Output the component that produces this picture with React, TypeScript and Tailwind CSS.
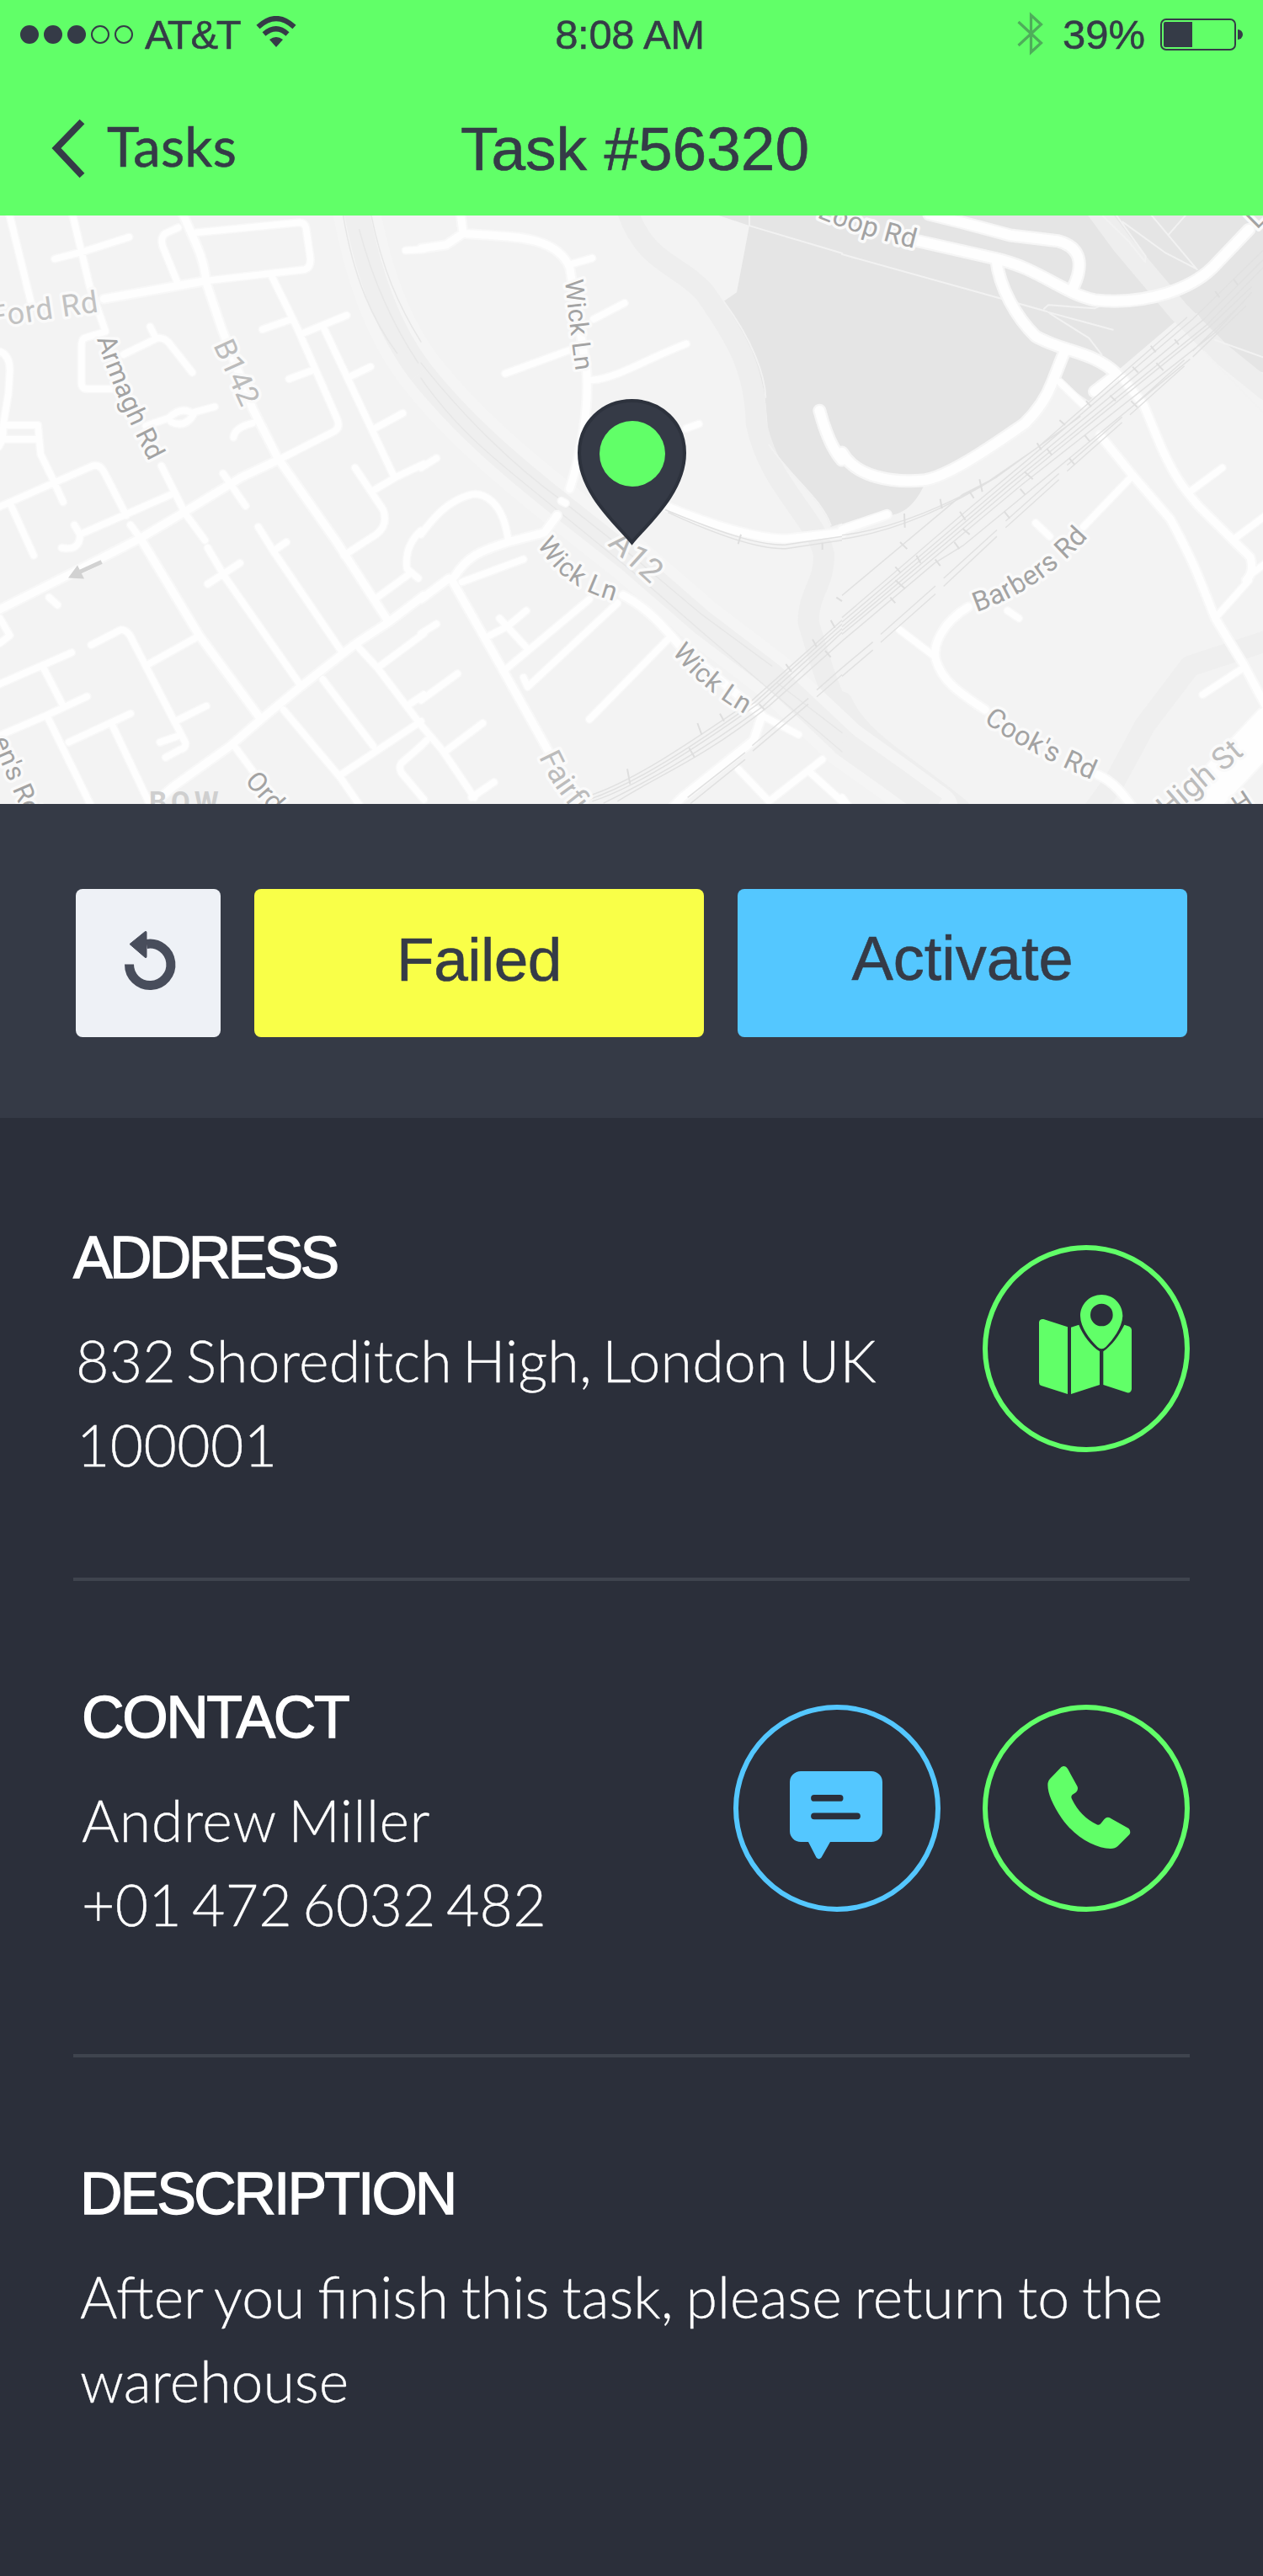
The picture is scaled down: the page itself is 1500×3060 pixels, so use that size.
import React from "react";

/* The map is surveyed as three sheets, each on its own 1500 x 1568 grid. */
type Sheets = { w?: string; c?: string; e?: string };

const SHEET_ORIGIN = { w: 0, c: 500, e: 1000 } as const;

function Layer({ d, stroke, width, fill = "none", cap = "round" }: { d: Sheets; stroke?: string; width?: number; fill?: string; cap?: "round" | "butt" }) {
  return (
    <>
      {(Object.keys(d) as (keyof Sheets)[]).map((k) => (
        <g key={k} transform={`translate(${SHEET_ORIGIN[k]} -6) scale(0.33333 0.45281)`}>
          <path d={d[k]} fill={fill} stroke={stroke} strokeWidth={width} strokeLinecap={cap} strokeLinejoin="round" vectorEffect="non-scaling-stroke" />
        </g>
      ))}
    </>
  );
}

const park: Sheets = {
  c: "M1060 13 L1170 40 L1125 215 L1075 240 C1150 320 1220 420 1230 520 L1240 610 C1330 710 1420 750 1460 830 L1502 820 V0 H1040Z",
  e: "M0 0 H1500 V425 L1410 405 L1340 345 L1265 270 L1190 290 L990 415 L880 500 L780 450 L750 450 Q700 530 640 565 C500 640 400 700 290 725 Q240 800 160 800 L0 830Z",
};
const river: Sheets = {
  c: "M735 0 C800 140 920 140 1010 215 C1130 340 1190 420 1195 560 C1240 720 1400 800 1435 900 C1440 980 1380 1000 1380 1080 C1420 1180 1450 1250 1500 1330",
  e: "M900 -10 L1000 90 L1200 265 L1350 375 L1510 470 M0 1290 C60 1390 220 1450 420 1570",
};
const creek: Sheets = { e: "M1510 1130 L1240 1195 L1080 1350 L970 1500 L900 1570" };
const motorway: Sheets = {
  w: "M1270 0 C1320 200 1400 330 1500 425",
  c: "M0 425 C150 565 330 675 500 775 L750 920 L1000 1080 L1250 1220 L1510 1400",
  e: "M0 1395 L200 1500 L330 1570",
};
const motorwayLines: Sheets = {
  w: "M1222 10 C1260 180 1330 290 1415 375 M1322 10 C1360 150 1420 250 1500 345 M1280 50 C1330 190 1400 300 1490 400",
  c: "M0 400 C150 540 330 670 500 760 L750 905 L1000 1060 L1250 1195 M0 440 C150 600 330 690 500 795 L750 945 L1000 1105 L1500 1420 M1270 1240 L1500 1370",
};
const footpaths: Sheets = {
  c: "M1170 0 L1170 40 L1500 112 M1080 240 C1180 340 1225 430 1228 490 M1240 615 C1330 710 1420 750 1460 825",
  e: "M0 115 L570 232 L730 265 M720 258 L735 248 L900 257 L925 248 M735 267 L850 290 L965 313 M740 270 L880 335 L925 378 M930 15 L1020 80 L1080 135 L1082 120 L975 10 M1100 10 L1265 155 M1000 30 L1150 110 L1260 152 M1165 62 L1225 12 M1330 340 L1500 385 M1290 370 L1500 530",
};
const lanes: Sheets = {
  w: "M30 0 L110 240 M255 0 L320 200 L375 315 M195 127 L310 105 L460 70 M635 45 L590 60 Q570 70 580 95 L630 185 M730 185 L1085 155 Q1110 150 1105 120 L1090 45 Q1085 30 1060 32 L700 58 M1445 105 L1510 102 M0 370 Q35 380 35 420 L30 480 L12 560 L10 600 L-5 620 M15 563 H135 L145 640 L185 700 L225 765 M20 600 H140 M375 318 L300 335 Q290 340 290 360 V450 Q290 468 310 468 H400 M440 378 L560 335 Q590 332 610 355 L685 425 M535 305 L555 335 M520 565 L600 545 Q650 510 690 535 Q660 572 610 555 M690 530 L765 515 M832 595 Q835 570 900 558 M935 312 L1040 285 M1070 325 L1235 275 M1155 310 L1405 700 M1250 435 L1320 410 M1030 442 L1110 420 M1335 572 L1435 532 M990 655 L1190 580 Q1215 570 1200 545 L1060 310 L970 175 M-10 780 L330 670 Q355 665 370 685 L450 800 M40 775 L120 905 M220 885 Q285 895 285 850 L440 800 L610 745 M265 825 L285 850 M575 670 L660 795 L730 865 M740 885 L800 960 L1070 1245 M740 980 L855 925 M465 825 L500 860 L710 1115 L930 1335 M795 690 L875 775 M920 830 L975 895 L1220 1160 M975 893 L1020 870 M1265 675 L1365 785 Q1385 825 1340 850 L1225 905 M1330 735 L1410 700 L1510 665 M1500 840 Q1440 880 1450 940 L1490 965 M1345 1015 L1465 950 M1270 1140 L1345 1200 L1500 1350 M1345 1200 L1510 1110 M1450 1300 L1510 1270 M1150 1230 L1330 1405 M1010 1310 L1215 1490 L1290 1570 M1215 1480 L1500 1340 M1500 1405 L1430 1450 Q1420 1460 1430 1475 L1510 1545 M840 1410 L900 1470 M175 1015 L205 1035 M0 1070 L35 1115 L0 1135 M325 1140 L430 1100 Q455 1100 470 1125 L660 1395 Q665 1410 640 1415 L590 1435 M570 1395 L630 1380 M625 1340 L735 1300 M530 1190 L700 1120 M-10 1245 L255 1160 M155 1200 L225 1300 M-10 1380 L165 1325 L310 1275 M170 1330 L330 1570 M245 1395 L465 1320 M400 1350 L535 1560",
  c: "M540 140 L610 125 M615 285 L725 243 M300 428 L535 365 M610 445 C700 440 800 390 945 350 M945 572 L990 560 M500 762 L515 768 M310 860 C290 760 220 740 180 745 C100 760 50 800 0 850 M0 675 L55 650 M145 975 L365 915 M300 1205 L600 1020 M365 1225 L380 1250 L700 1030 M600 1335 L880 1125 M245 1115 L310 1090 L375 1050 M280 1070 L380 1150 M0 1110 L55 1085 M0 1285 L130 1215 M0 1350 L75 1415 L190 1540 M85 1420 L220 1345 M180 1540 L260 1500 M0 1405 L20 1390 M1130 1465 L1240 1550 L1430 1440 M1380 1470 L1500 1550 M1215 1325 L1345 1375",
  e: "M860 830 L1030 700 M690 820 L740 855 M1245 735 L1355 675 M1400 860 L1510 800 M1465 950 L1510 925 M205 1100 L330 1170 M590 1050 L630 1070 M1285 1270 L1430 1200 M775 450 L860 510 M1335 1065 L1450 970 M0 1540 L30 1570",
};
const streets: Sheets = {
  w: "M370 232 L730 185 M640 -10 L700 90 Q730 140 735 190 L790 310 L900 520 L990 650 L1200 870 L1385 1080 M-10 1050 L260 950 L500 860 L660 790 L860 700 L990 655 M1510 1010 L1385 1080 L1270 1135 L1070 1250 L930 1335 L820 1405 L620 1510 L540 1560 M500 860 L710 1115 L930 1335",
  c: "M0 100 L90 90 L150 60 C300 70 480 60 530 150 L590 420 C600 520 570 640 530 730 M150 60 L140 0 M485 800 L440 845 L310 870 C230 890 170 900 120 960 M0 1020 L100 965 M110 970 L280 1190 L440 1400 L500 1480 M720 1010 C800 1040 850 1080 920 1140 L1215 1325 L1185 1390 L930 1540 L890 1570 M870 775 C1050 830 1200 860 1300 862 L1500 845",
  e: "M0 838 L160 798 M920 590 L1030 690 L1170 810 C1260 930 1280 980 1330 1070 L1430 1190 L1510 1300 M1000 440 L1075 510 L1120 590 C1180 700 1230 740 1270 775 L1455 910 Q1470 950 1440 970 M450 1040 C360 1080 320 1140 335 1180 C360 1240 430 1270 510 1310 M910 1480 C970 1500 1000 1530 1040 1570",
};
const avenues: Sheets = {
  c: "M1420 525 C1440 580 1470 630 1500 655",
  e: "M0 635 C50 700 180 715 290 708 C380 700 550 610 650 560 Q720 510 750 450 L790 375 M310 10 L420 30 L600 65 L770 80 C870 100 850 160 825 200 M270 80 L540 125 C700 150 780 215 900 235 C1100 250 1250 200 1320 150 L1450 50 M550 130 C560 200 620 280 690 330 C780 370 900 370 980 430 L900 475",
};
const highStreet: Sheets = { e: "M1160 1640 L1530 1350" };
const rails: Sheets = {
  c: "M600 1535 C750 1500 950 1400 1180 1285 L1500 1075 M600 1545 C760 1505 960 1410 1190 1290 L1500 1085 M610 1550 C760 1515 970 1415 1200 1295 L1500 1097 M650 1555 C800 1500 980 1430 1220 1300 L1500 1107 M700 1550 C850 1480 1000 1440 1240 1300 L1500 1130 M870 785 C1050 840 1200 880 1300 877 L1500 855 M880 792 C1050 850 1200 890 1300 887 L1500 865 M950 1540 L1155 1422 M960 1556 L1155 1440 M1180 1404 L1380 1280 M1182 1418 L1380 1295 M1410 1258 L1500 1200 M1410 1276 L1500 1218",
  e: "M0 1068 L440 790 L660 655 L1250 285 L1500 105 M0 1080 L600 705 L1290 285 L1500 130 M0 1092 L600 717 L1300 300 L1500 150 M0 1102 L640 705 L1310 305 L1460 200 M0 1112 L640 720 L1330 320 L1460 215 M0 1130 L330 925 L430 880 L1240 390 M0 1010 L430 745 L550 700 L850 540 M0 852 C200 835 400 760 500 722 L700 620 L1230 280 M0 862 C200 842 400 770 550 700 M0 1200 L110 1132 M0 1222 L110 1153 M138 1112 L333 985 M138 1133 L333 1006 M362 965 L552 838 M362 986 L552 855 M583 815 L773 690 M583 832 L773 706 M802 668 L998 542 M802 684 L998 556 M1026 520 L1220 392 M1026 536 L1220 408 M1250 368 L1430 240 M1250 384 L1440 250",
};
const sleepers: Sheets = {
  c: "M1130 875 L1140 850 M1430 890 V872 M985 1345 L1000 1375 M955 1410 L975 1435 M735 1465 L745 1505 M1065 1320 L1080 1340 M1460 1075 L1475 1095 M1480 1015 L1500 1025 M1440 1155 L1460 1172 M1395 1125 L1410 1145 M1300 1190 L1320 1210 M1205 1295 L1225 1310",
  e: "M350 757 L356 782 M222 795 L224 832 M490 705 L500 738 M455 738 L470 755 M207 870 L232 888 M775 550 L795 563 M695 610 L710 628 M1100 355 L1118 372 M1185 338 L1200 352 M955 485 L975 500 M1035 410 L1055 425 M870 500 L888 515 M730 625 L748 642 M650 685 L680 705 M635 730 L652 745 M578 790 L598 808 M420 790 L440 812 M430 835 L455 850 M400 870 L418 888 M332 915 L350 932 M190 935 L208 950 M190 970 L225 992 M172 1015 L190 1030 M265 905 L280 925 M810 650 L828 666 M865 590 L883 606 M1120 400 L1145 420 M1030 500 L1052 516 M1330 212 L1345 228 M1395 180 L1410 195",
};
const arrowhead: Sheets = { w: "M243 964 L276 931 L300 966Z" };

type LabelProps = { id: string; d: string; size: number; color?: string; spacing?: number; children: string };
function StreetLabel({ id, d, size, color = "#a3a3a3", spacing = 0, children }: LabelProps) {
  return (
    <>
      <path id={id} d={d} fill="none" />
      <text fontSize={size} fill={color} stroke="#fafafa" strokeWidth={7} strokeLinejoin="round" paintOrder="stroke" letterSpacing={spacing}>
        <textPath href={`#${id}`}>{children}</textPath>
      </text>
    </>
  );
}

function StreetMap() {
  return (
    <svg className="block h-[699px] w-full bg-[#f3f3f3]" viewBox="0 0 1500 699" fontFamily="Roboto, sans-serif">
      <Layer d={park} fill="#e5e5e5" />
      <Layer d={river} stroke="#eeeeee" width={25} />
      <Layer d={creek} stroke="#efefef" width={25} />
      <Layer d={motorway} stroke="#f5f5f5" width={56} />
      <Layer d={motorway} stroke="#efefef" width={30} cap="butt" />
      <Layer d={motorwayLines} stroke="#e7e7e7" width={1.5} />
      <Layer d={footpaths} stroke="#f2f2f2" width={2} />
      <Layer d={lanes} stroke="#f8f8f8" width={10.5} />
      <Layer d={streets} stroke="#f8f8f8" width={13} />
      <Layer d={avenues} stroke="#f6f6f6" width={16} />
      <Layer d={highStreet} stroke="#f8f8f8" width={50} />
      <Layer d={lanes} stroke="#fefefe" width={7.5} />
      <Layer d={streets} stroke="#fefefe" width={9} />
      <Layer d={avenues} stroke="#fefefe" width={11.5} />
      <Layer d={highStreet} stroke="#fefefe" width={46} />
      <Layer d={rails} stroke="#e1e1e1" width={1.5} cap="butt" />
      <Layer d={sleepers} stroke="#dedede" width={2} cap="butt" />
      <Layer d={{ w: "M362 922 L285 948" }} stroke="#d2d2d2" width={5} cap="butt" />
      <Layer d={arrowhead} fill="#d2d2d2" />

      <StreetLabel id="ford" d="M-10 133 L160 108" size={36} spacing={0.9} color="#c2c2c2">Ford Rd</StreetLabel>
      <StreetLabel id="armagh" d="M115 147 Q140 225 188 312" size={31.5} spacing={0.3}>Armagh Rd</StreetLabel>
      <StreetLabel id="b142" d="M253 154 L297 250" size={35.5} color="#bcbcbc">B142</StreetLabel>
      <StreetLabel id="allens" d="M-10 624 L40 740" size={32}>en's Rd</StreetLabel>
      <StreetLabel id="ordell" d="M290 672 L360 752" size={32}>Ordell</StreetLabel>
      <StreetLabel id="wick1" d="M671 77 Q677 140 688 215" size={30.5} spacing={0.3}>Wick Ln</StreetLabel>
      <StreetLabel id="a12" d="M721 391 L800 463" size={39} spacing={0.4} color="#b8b8b8">A12</StreetLabel>
      <StreetLabel id="wick2" d="M638 391 C662 430 690 450 750 463" size={31.5} spacing={1}>Wick Ln</StreetLabel>
      <StreetLabel id="wick3" d="M798 519 Q838 570 905 603" size={31.5} spacing={0.6}>Wick Ln</StreetLabel>
      <StreetLabel id="fairfield" d="M640 643 Q660 690 720 750" size={36} color="#bcbcbc">Fairfield</StreetLabel>
      <StreetLabel id="loop1" d="M970 2 Q1020 24 1110 45" size={32.5} spacing={0.4}>Loop Rd</StreetLabel>
      <StreetLabel id="barbers" d="M1160 471 Q1250 440 1310 360" size={32.5} spacing={0.3}>Barbers Rd</StreetLabel>
      <StreetLabel id="cooks" d="M1168 601 Q1220 640 1320 680" size={32.5} spacing={0.5}>Cook's Rd</StreetLabel>
      <StreetLabel id="high" d="M1387 717 L1500 621" size={37} color="#bcbcbc">High St</StreetLabel>
      <StreetLabel id="loop2" d="M1493 17 L1530 -20" size={31}>L</StreetLabel>
      <StreetLabel id="hunts" d="M1472 712 L1520 680" size={31}>H</StreetLabel>
      <text x={177} y={708} fontSize={33} fontWeight={700} letterSpacing={5} fill="#cfcfcf">BOW</text>

      <path d="M750.5 388.500C735 369 688 330 688 282C688 246 716 220 750.500 220C785 220 813 246 813 282C813 330 766 369 750.500 388.500Z" fill="#353a46" stroke="#2d323d" strokeWidth="4" />
      <circle cx="751" cy="283" r="39" fill="#61ff68" />
    </svg>
  );
}

function StatusBar() {
  return (
    <div className="relative flex h-20 items-start justify-between pl-6 pr-6 text-[49px] leading-[49px] text-[#353b47] [-webkit-text-stroke:0.500px_#353b47]">
      <div className="flex items-start">
        <div className="mt-[30px] flex gap-1.5">
          {[true, true, true, false, false].map((on, i) => (
            <span key={i} className={on ? "size-[22px] rounded-full bg-[#353b47]" : "size-[22px] rounded-full border-2 border-[#353b47]"} />
          ))}
        </div>
        <span className="ml-3.5 mt-[17px] w-[114px] whitespace-nowrap tracking-[-2.300px]">AT&amp;T</span>
        <svg className="ml-[17px] mt-[19px] h-[38px] w-[50px]" viewBox="303 19 50 38" fill="none" stroke="#353b47" strokeWidth="6">
          <path d="M306.500 32Q328 12 349.500 32" />
          <path d="M313.500 40.500Q328 28 341.500 40.500" />
          <path d="M320 47Q328 41 336 47L328 56Z" fill="#353b47" stroke="none" />
        </svg>
      </div>
      <span className="absolute inset-x-0 top-[17px] pr-1 text-center tracking-[-0.300px]">8:08 AM</span>
      <div className="flex items-start">
        <svg className="mt-3.5 h-[52px] w-8" viewBox="0 0 32 52" fill="none" stroke="#353b47" strokeOpacity=".42" strokeWidth="3.200">
          <path d="M1.500 12L28.500 37L16.500 48V4L28.500 15L1.500 40" />
        </svg>
        <span className="ml-[22px] mt-[17px]">39%</span>
        <div className="ml-[18px] mt-[22px] h-[38px] w-[90px] rounded-[7px] border-2 border-[#353b47] p-0.5">
          <div className="h-[30px] w-[34px] rounded-l-[2px] bg-[#353b47]" />
        </div>
        <div className="ml-0.5 mt-[35px] h-3 w-1.5 rounded-r-full bg-[#353b47]" />
      </div>
    </div>
  );
}

function NavBar() {
  return (
    <div className="relative flex h-44 items-start text-[#353b47] [-webkit-text-stroke:0.600px_#353b47]">
      <svg className="ml-[60px] mt-[60px] h-[74px] w-[42px]" viewBox="60 140 42 74" fill="none" stroke="#353b47" strokeWidth="8">
        <path d="M97.500 144.500L67 176L97.500 208.500" />
      </svg>
      <span className="ml-[25px] mt-[61px] font-['Lato',sans-serif] text-[65px] leading-[65px] tracking-[0.300px]">Tasks</span>
      <h1 className="absolute inset-x-0 top-[61px] pl-2 text-center text-[73px] leading-[72px]">Task #56320</h1>
    </div>
  );
}

const heading = "text-[70px] leading-[70px] [-webkit-text-stroke:1.300px_white]";
const body = "mt-[37px] font-['Lato',sans-serif] text-[68px] font-light leading-[100px] [-webkit-text-stroke:0.300px_white]";

function RoundButton({ label, viewBox, tone, children }: { label: string; viewBox: string; tone: "green" | "blue"; children: React.ReactNode }) {
  return (
    <button
      aria-label={label}
      className={tone === "green" ? "size-[246px] shrink-0 rounded-full border-[6px] border-[#61ff68] text-[#61ff68]" : "size-[246px] shrink-0 rounded-full border-[6px] border-[#54c7ff] text-[#54c7ff]"}
    >
      <svg className="size-[234px]" viewBox={viewBox} fill="currentColor">
        {children}
      </svg>
    </button>
  );
}

export default function App() {
  return (
    <div className="flex h-[3060px] w-[1500px] flex-col overflow-hidden bg-[#2b2f3a] font-['Liberation_Sans',Arial,sans-serif]">
      <header className="h-64 shrink-0 bg-[#61ff68]">
        <StatusBar />
        <NavBar />
      </header>

      <div className="h-[699px] shrink-0">
        <StreetMap />
      </div>

      <section className="flex h-[373px] shrink-0 items-start gap-10 bg-[#353a46] px-[90px] pt-[101px] text-[#353b47]">
        <button aria-label="Undo" className="h-44 w-[172px] rounded-lg bg-[#eef1f6]">
          <svg className="h-44 w-[172px]" viewBox="90 1056 172 176">
            <path d="M153.500 1145.500A24.700 24.700 0 1 0 174 1121.500" fill="none" stroke="#484d5b" strokeWidth="11" />
            <path d="M154 1121.500L172.500 1106.500Q174 1106 174 1107.500V1136.500Q174 1138 172.500 1137.500Z" fill="#484d5b" stroke="#484d5b" strokeWidth="1" />
          </svg>
        </button>
        <button className="h-44 w-[534px] rounded-lg bg-[#f9ff48] pb-[9px] text-[73px] leading-[73px] tracking-[-0.500px] [-webkit-text-stroke:0.600px_#353b47]">Failed</button>
        <button className="h-44 w-[534px] rounded-lg bg-[#54c7ff] pb-[11px] text-[74px] leading-[74px] [-webkit-text-stroke:0.600px_#353b47]">Activate</button>
      </section>

      <main className="pl-[87px] pr-[87px] pt-[131px] text-white">
        <section className="flex h-[415px] items-start justify-between">
          <div>
            <h2 className={`${heading} tracking-[-3.700px]`}>ADDRESS</h2>
            <p className={`${body} pl-[3px]`}>
              <span className="block tracking-[0.200px] [word-spacing:-6.500px]">832 Shoreditch High, London UK</span>
              <span className="block pl-px tracking-[0.300px]">100001</span>
            </p>
          </div>
          <div className="mt-5">
            <RoundButton label="Open map" viewBox="99 105 702 702" tone="green">
              <path d="M298 351L384 379V618L290 588Q282 585 282 576V362Q284 349 298 351Z" />
              <path d="M396 380L424 371C438 408 468 446 498 466V585L396 618Z" />
              <path d="M586 371L604 377Q612 381 612 389V600Q610 615 596 613L511 585V466C542 444 568 408 586 371Z" />
              <path fillRule="evenodd" d="M505 264C548 264 580 298 580 340C578 382 545 425 520 450Q505 464 490 450C462 422 430 382 429 340C429 298 462 264 505 264ZM505 296A40 40 0 1 0 505 376A40 40 0 1 0 505 296Z" />
            </RoundButton>
          </div>
        </section>
        <hr className="h-1 border-0 bg-[#3f444e]" />
        <section className="flex h-[562px] items-start justify-between pt-[127px]">
          <div className="pl-[10px]">
            <h2 className={`${heading} tracking-[-2.400px]`}>CONTACT</h2>
            <p className={`${body}`}>
              <span className="block tracking-[0.500px] [word-spacing:-4px]">Andrew Miller</span>
              <span className="block tracking-[0.200px] [word-spacing:-6.500px]">+01 472 6032 482</span>
            </p>
          </div>
          <div className="mt-5 flex gap-[50px]">
            <RoundButton label="Message" viewBox="877 2031 234 234" tone="blue">
              <path fillRule="evenodd" d="M951 2104H1035A13 13 0 0 1 1048 2117V2175A13 13 0 0 1 1035 2188H986L975.500 2206.500Q972.500 2210 969.500 2206.500L960 2188H951A13 13 0 0 1 938 2175V2117A13 13 0 0 1 951 2104ZM967 2132A3.900 3.900 0 0 0 967 2139.800H997.600A3.900 3.900 0 0 0 997.600 2132ZM967 2153.400A3.900 3.900 0 0 0 967 2161.200H1018A3.900 3.900 0 0 0 1018 2153.400Z" />
            </RoundButton>
            <RoundButton label="Call" viewBox="1173 2031 234 234" tone="green">
              <path d="M1260.500 2099Q1265 2096 1268 2101L1279.500 2122Q1281 2126 1278 2129L1273.500 2132Q1271.500 2134 1273 2137Q1283 2158 1303 2167.500Q1306 2168.500 1307.500 2166L1311.500 2161Q1315.500 2157 1320 2160.500L1340.500 2172Q1343.500 2175.500 1341.500 2179L1327.500 2193Q1324.500 2196 1319 2196C1301 2196 1276 2182 1261 2160C1249 2142 1243.500 2128 1244.500 2118Q1245 2115 1247 2113Z" />
            </RoundButton>
          </div>
        </section>
        <hr className="h-1 border-0 bg-[#3f444e]" />
        <section className="pl-[8px] pt-[127px]">
          <h2 className={`${heading} tracking-[-3px]`}>DESCRIPTION</h2>
          <p className={`${body} [word-spacing:-3.600px]`}>
            After you finish this task, please return to the
            <br />
            warehouse
          </p>
        </section>
      </main>
    </div>
  );
}
